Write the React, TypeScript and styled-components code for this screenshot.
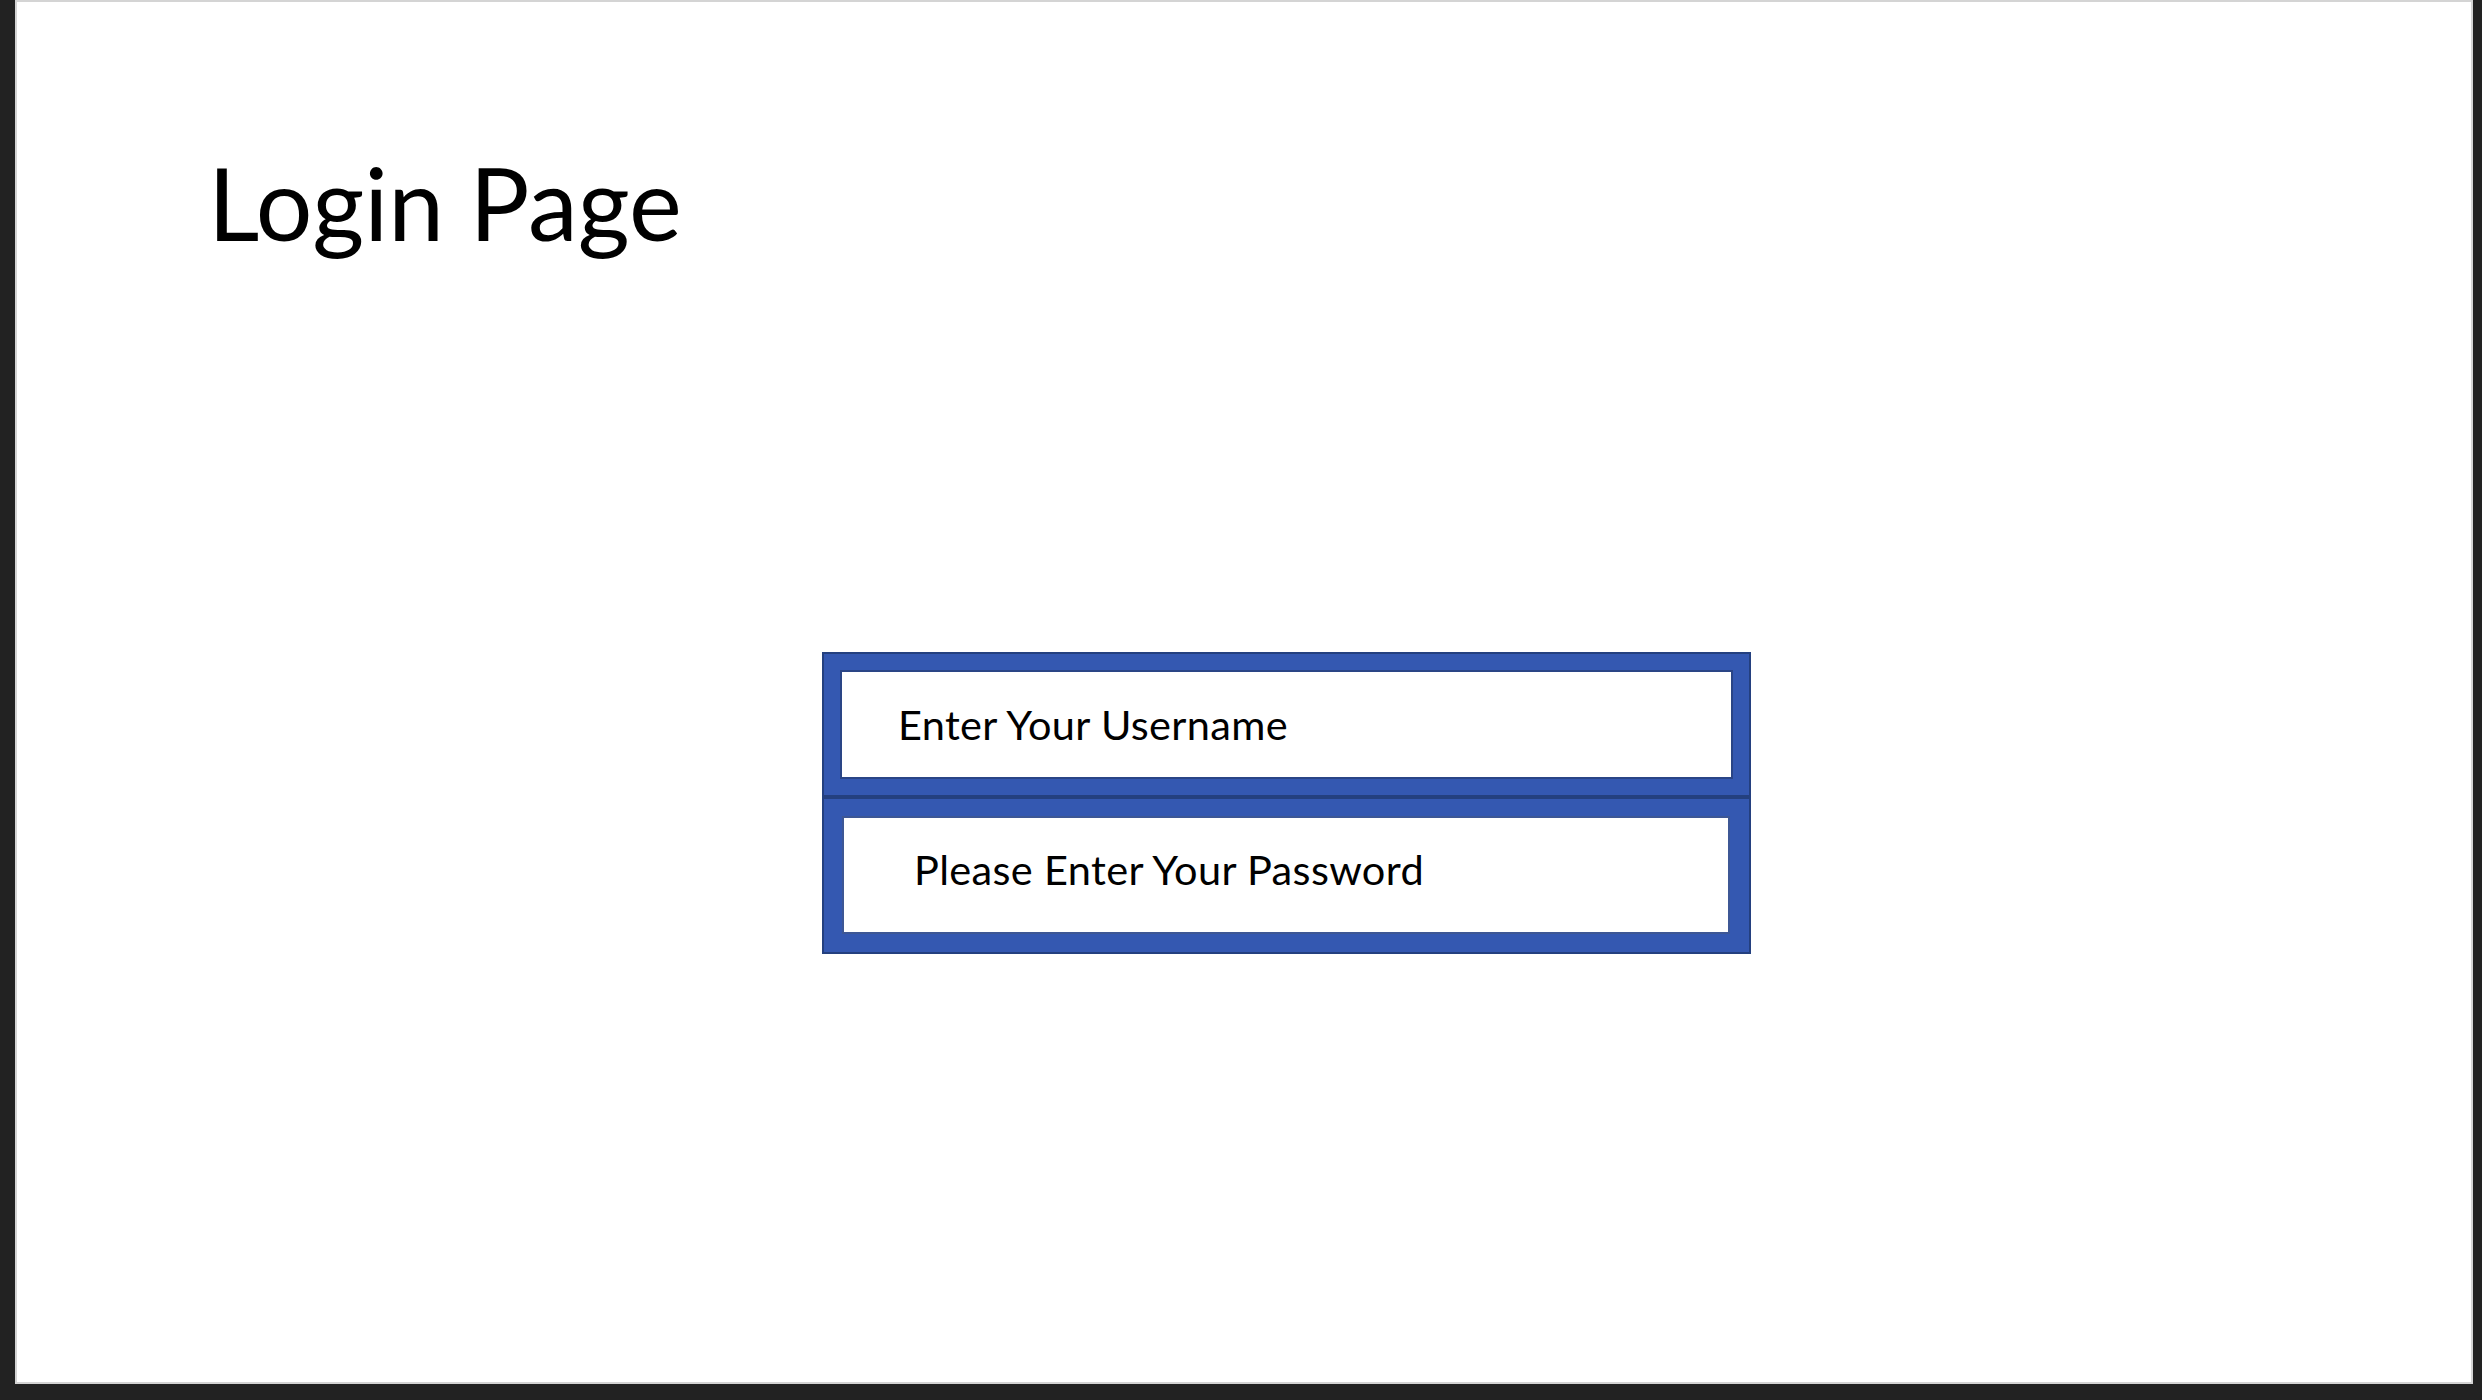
import React from "react";
import styled, { createGlobalStyle } from "styled-components";

const Global = createGlobalStyle`
  html, body {
    margin: 0;
    padding: 0;
    background: #222222;
  }
  body {
    width: 2482px;
    height: 1400px;
    overflow: hidden;
    font-family: Lato, "Open Sans", "Liberation Sans", sans-serif;
  }
  * { box-sizing: border-box; }
`;

const Stage = styled.div`
  display: flex;
  align-items: flex-start;
  width: 2482px;
  height: 1400px;
  padding-left: 15px;
  background: #222222;
`;

const Slide = styled.main`
  display: flex;
  flex-direction: column;
  width: 2458px;
  height: 1384px;
  background: #ffffff;
  border: 2px solid #d4d4d4;
`;

const Title = styled.h1`
  margin: 140px 0 0 191px;
  font-family: Lato, "Open Sans", sans-serif;
  font-weight: 400;
  font-size: 100px;
  line-height: 1.2;
  color: #000;
`;

const Form = styled.form`
  display: flex;
  flex-direction: column;
  width: 929px;
  margin: 390px 0 0 805px;
`;

const Row = styled.div<{ $pad: string; $h: number }>`
  display: flex;
  height: ${(p) => p.$h}px;
  padding: ${(p) => p.$pad};
  background: #3458b1;
  border: 2px solid #24407f;
`;

const Field = styled.input<{ $indent: number; $lift: number; $line: string }>`
  flex: 1;
  min-width: 0;
  height: 100%;
  margin: 0;
  padding: 0 0 ${(p) => p.$lift}px ${(p) => p.$indent}px;
  background: #ffffff;
  border: 2px solid ${(p) => p.$line};
  border-radius: 0;
  outline: none;
  font-family: Lato, "Open Sans", sans-serif;
  font-size: 41.5px;
  letter-spacing: 0.35px;
  color: #000;
  &::placeholder {
    color: #000;
    opacity: 1;
  }
`;

export default function App() {
  return (
    <>
      <Global />
      <Stage>
        <Slide>
          <Title>Login Page</Title>
          <Form onSubmit={(e) => e.preventDefault()}>
            <Row $h={145} $pad="16px 16px 16px 16px">
              <Field $indent={56} $lift={2} $line="#2a4586" placeholder="Enter Your Username" />
            </Row>
            <Row $h={157} $pad="17px 19px 18px 18px">
              <Field $indent={70} $lift={12} $line="#3d5795" type="password" placeholder="Please Enter Your Password" />
            </Row>
          </Form>
        </Slide>
      </Stage>
    </>
  );
}
